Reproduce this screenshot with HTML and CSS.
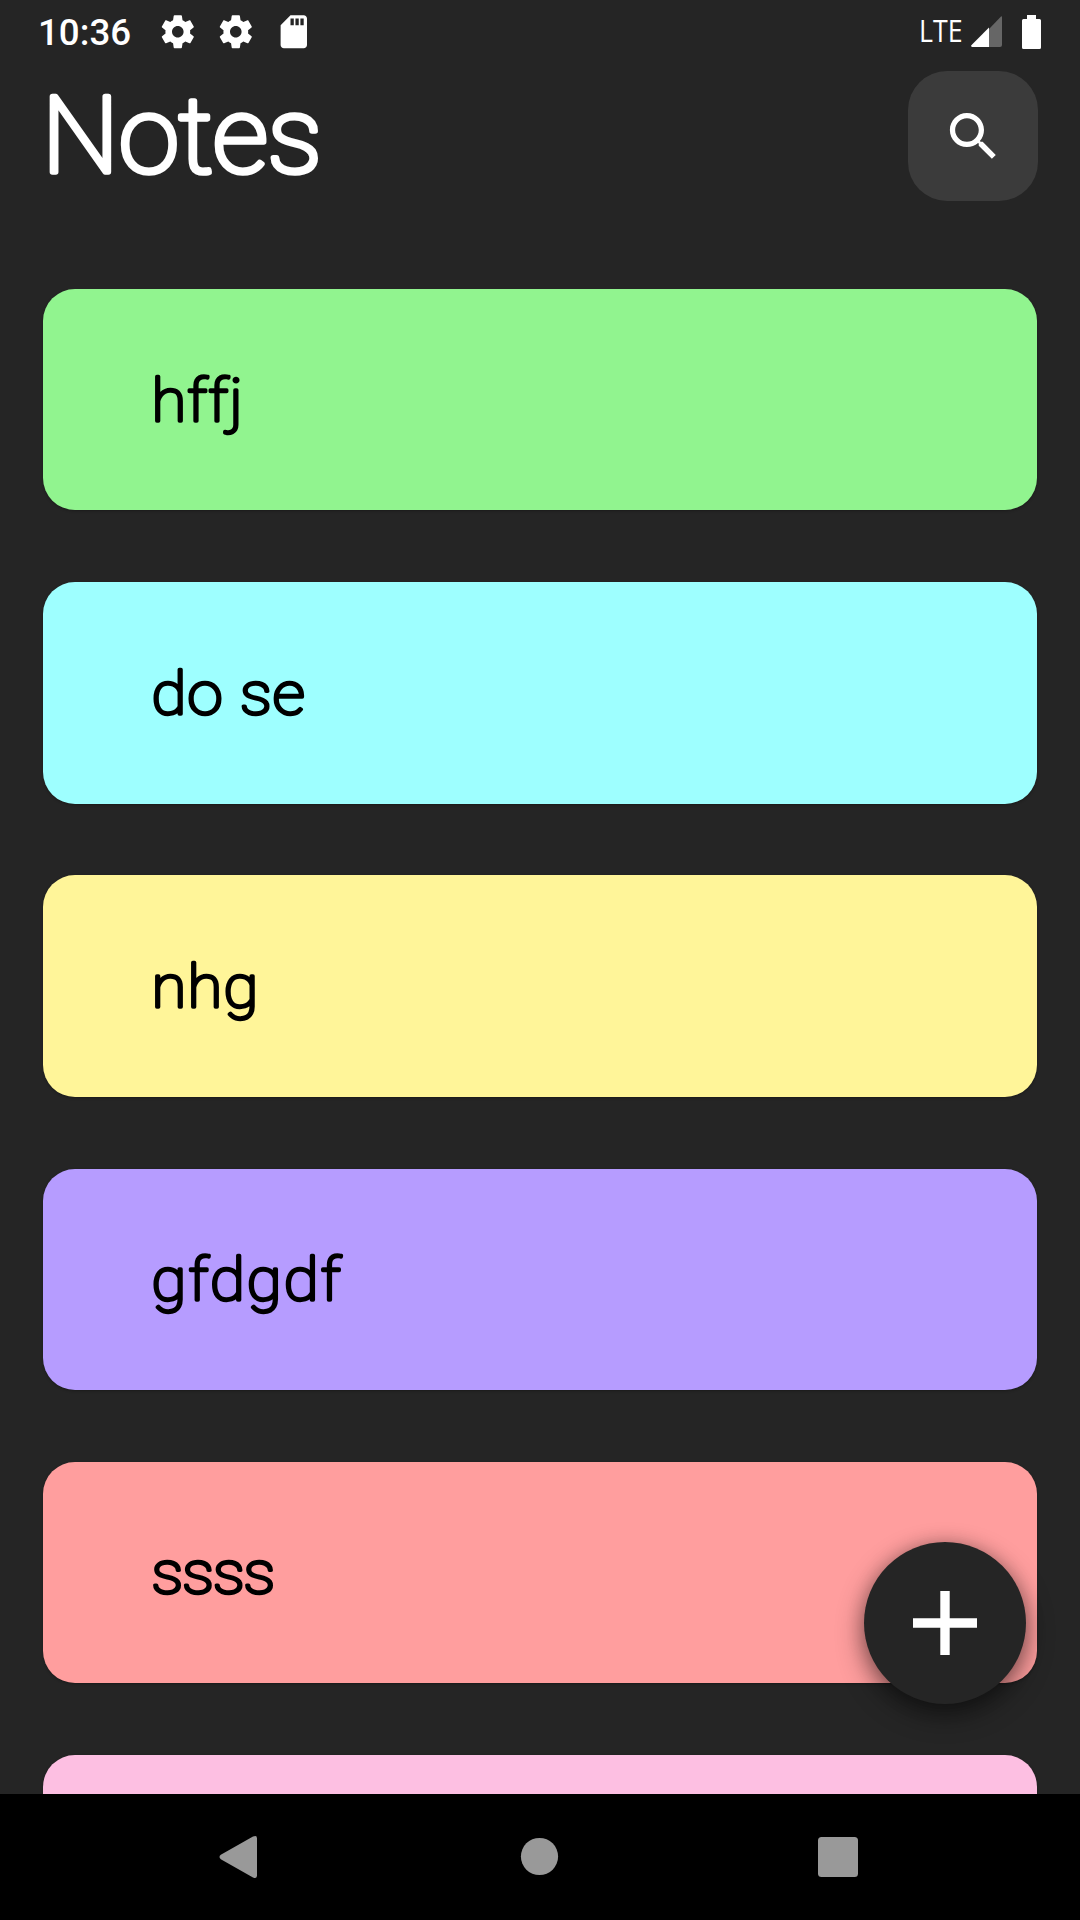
FILE: index.html
```html
<!DOCTYPE html>
<html lang="en">
<head>
<meta charset="utf-8">
<title>Notes</title>
<link rel="stylesheet" href="styles.css">
</head>
<body>
<div class="screen">
  <div class="status-bar">
    <span class="clock">10:36</span>
    <div class="status-icons">
      <svg class="status-icon" viewBox="0 0 24 24"><path d="M19.43 12.98c.04-.32.07-.64.07-.98s-.03-.66-.07-.98l2.11-1.65c.19-.15.24-.42.12-.64l-2-3.46c-.12-.22-.39-.3-.61-.22l-2.49 1c-.52-.4-1.08-.73-1.69-.98l-.38-2.65C14.46 2.18 14.25 2 14 2h-4c-.25 0-.46.18-.49.42l-.38 2.65c-.61.25-1.17.59-1.69.98l-2.49-1c-.23-.09-.49 0-.61.22l-2 3.46c-.13.22-.07.49.12.64l2.11 1.65c-.04.32-.07.65-.07.98s.03.66.07.98l-2.11 1.65c-.19.15-.24.42-.12.64l2 3.46c.12.22.39.3.61.22l2.49-1c.52.4 1.08.73 1.69.98l.38 2.65c.03.24.24.42.49.42h4c.25 0 .46-.18.49-.42l.38-2.65c.61-.25 1.17-.59 1.69-.98l2.49 1c.23.09.49 0 .61-.22l2-3.46c.12-.22.07-.49-.12-.64l-2.11-1.65zM12 15.5c-1.93 0-3.5-1.57-3.5-3.5s1.57-3.5 3.5-3.5 3.5 1.57 3.5 3.5-1.57 3.5-3.5 3.5z"/></svg>
      <svg class="status-icon" viewBox="0 0 24 24"><path d="M19.43 12.98c.04-.32.07-.64.07-.98s-.03-.66-.07-.98l2.11-1.65c.19-.15.24-.42.12-.64l-2-3.46c-.12-.22-.39-.3-.61-.22l-2.49 1c-.52-.4-1.08-.73-1.69-.98l-.38-2.65C14.46 2.18 14.25 2 14 2h-4c-.25 0-.46.18-.49.42l-.38 2.65c-.61.25-1.17.59-1.69.98l-2.49-1c-.23-.09-.49 0-.61.22l-2 3.46c-.13.22-.07.49.12.64l2.11 1.65c-.04.32-.07.65-.07.98s.03.66.07.98l-2.11 1.65c-.19.15-.24.42-.12.64l2 3.46c.12.22.39.3.61.22l2.49-1c.52.4 1.08.73 1.69.98l.38 2.65c.03.24.24.42.49.42h4c.25 0 .46-.18.49-.42l.38-2.65c.61-.25 1.17-.59 1.69-.98l2.49 1c.23.09.49 0 .61-.22l2-3.46c.12-.22.07-.49-.12-.64l-2.11-1.65zM12 15.5c-1.93 0-3.5-1.57-3.5-3.5s1.57-3.5 3.5-3.5 3.5 1.57 3.5 3.5-1.57 3.5-3.5 3.5z"/></svg>
      <svg class="status-icon" viewBox="0 0 24 24"><path d="M18 2h-8L4.02 8 4 20c0 1.1.9 2 2 2h12c1.1 0 2-.9 2-2V4c0-1.1-.9-2-2-2zm-6 6h-2V4h2v4zm3 0h-2V4h2v4zm3 0h-2V4h2v4z"/></svg>
    </div>
    <div class="status-right">
      <span class="network">LTE</span>
      <svg class="signal" viewBox="0 0 31 31"><path class="signal-rest" d="M18 13 30 .6q1-.9 1 .7v27.7q0 2-2 2H18z"/><path d="M18 11.5V31H1.200Q-.8 30.500.6 28.900z"/></svg>
      <svg class="battery" viewBox="0 0 19 34"><path d="M5 0h9v4h3.500Q19 4 19 5.500v27q0 1.500-1.500 1.500h-16Q0 34 0 32.500v-27Q0 4 1.500 4H5z"/></svg>
    </div>
  </div>
  <header class="header">
    <svg class="title" viewBox="0 0 400 130" role="heading" aria-level="1"><text x="1" y="101.500">Notes</text></svg>
    <button class="search" aria-label="Search"><svg class="search-icon" viewBox="0 0 24 24"><path d="M15.500 14h-.79l-.28-.27C15.410 12.590 16 11.110 16 9.500 16 5.910 13.090 3 9.500 3S3 5.910 3 9.500 5.910 16 9.500 16c1.610 0 3.090-.59 4.230-1.570l.27.28v.79l5 4.990L20.490 19l-4.990-5zm-6 0C7.010 14 5 11.990 5 9.500S7.010 5 9.500 5 14 7.010 14 9.500 11.990 14 9.500 14z"/></svg></button>
  </header>
  <main class="notes">
    <article class="note green"><svg class="note-title tight" viewBox="0 0 600 100"><text x="0.500" y="71.500">hffj</text></svg></article>
    <article class="note cyan"><svg class="note-title" viewBox="0 0 600 100"><text x="0.500" y="71.500">do se</text></svg></article>
    <article class="note yellow"><svg class="note-title" viewBox="0 0 600 100"><text x="0.500" y="71.500">nhg</text></svg></article>
    <article class="note purple"><svg class="note-title loose" viewBox="0 0 600 100"><text x="0.500" y="71.500">gfdgdf</text></svg></article>
    <article class="note red"><svg class="note-title tighter" viewBox="0 0 600 100"><text x="0.500" y="71.500">ssss</text></svg></article>
    <article class="note pink"></article>
  </main>
  <nav class="nav-bar">
    <svg class="nav-icon" viewBox="0 0 44 44"><path d="M2.800 19.800 35 1.600q4-2 4 1.800v37.200q0 3.800-4 1.800L2.800 24.200q-2.600-2.200 0-4.400z"/></svg>
    <svg class="nav-icon" viewBox="0 0 44 44"><circle cx="22.500" cy="21.500" r="18.600"/></svg>
    <svg class="nav-icon" viewBox="0 0 44 44"><rect x="2" y="2" width="40" height="40" rx="3.500"/></svg>
  </nav>
  <button class="fab" aria-label="Add note"><svg class="fab-icon" viewBox="0 0 64 64"><path d="M27.300 0h9.400v27.300H64v9.400H36.700V64h-9.400V36.700H0v-9.400h27.300z"/></svg></button>
</div>
</body>
</html>
```
FILE: styles.css
```css
* { box-sizing: border-box; }
body { margin: 0; background: #252525; }
button { border: 0; padding: 0; display: flex; align-items: center; justify-content: center; }
svg { display: block; fill: #fff; flex: none; }

.screen {
  position: relative;
  width: 1080px;
  height: 1920px;
  overflow: hidden;
  display: flex;
  flex-direction: column;
  background: #252525;
  color: #fff;
}

.status-bar {
  height: 63px;
  flex: none;
  display: flex;
  align-items: center;
  padding: 0 39px 0 38px;
}
.clock {
  width: 120px;
  padding-top: 3px;
  font: 500 36.700px/1 Roboto, sans-serif;
}
.status-icons { display: flex; gap: 18.400px; }
.status-icon { width: 39.600px; height: 39.600px; }
.status-right { margin-left: auto; display: flex; align-items: center; }
.network {
  width: 52px;
  margin-top: -3px;
  font: 400 31.500px/1 "Open Sans", sans-serif;
  transform: scaleX(.85);
  transform-origin: left;
}
.signal { width: 31px; height: 31px; margin-right: 20px; }
.signal-rest { fill: #666; }
.battery { width: 19px; height: 34px; }

.header {
  height: 226px;
  flex: none;
  display: flex;
  justify-content: space-between;
  align-items: flex-start;
  padding: 8.300px 42px 0 41px;
}
.title {
  width: 400px;
  height: 130px;
  font: 100 105px Roboto, sans-serif;
  letter-spacing: 0;
  stroke: #fff;
  stroke-width: 5.600px;
  stroke-linejoin: round;
}
.title text { transform: scaleX(1.035); }
.search {
  width: 130px;
  height: 130px;
  border-radius: 39px;
  background: #3b3b3b;
}
.search-icon { width: 63px; height: 63px; }

.notes {
  flex: 1;
  min-height: 0;
  overflow: hidden;
  display: flex;
  flex-direction: column;
  gap: 71.800px;
  padding: 0 43px;
}
.note {
  height: 221.400px;
  flex: none;
  display: flex;
  align-items: center;
  padding-left: 108px;
  border-radius: 32px;
  box-shadow: 0 1px 3px rgba(0, 0, 0, .3);
}
.note-title {
  width: 600px;
  height: 100px;
  fill: #000;
  stroke: #000;
  stroke-width: 3.400px;
  stroke-linejoin: round;
  font: 100 60px Roboto, sans-serif;
  font-variant-ligatures: none;
  letter-spacing: 1.100px;
}
.note-title text { transform: scaleX(1.06); }
.tight { letter-spacing: .900px; }
.tighter { letter-spacing: -.900px; }
.loose { letter-spacing: 2px; }
.green { background: #91f48f; }
.cyan { background: #9effff; }
.yellow { background: #fff599; }
.purple { background: #b69cff; }
.red { background: #ff9e9e; }
.pink { background: #fdbfe2; }

.nav-bar {
  height: 126px;
  flex: none;
  display: flex;
  justify-content: space-between;
  align-items: center;
  padding: 0 220px 0 218px;
  background: #000;
}
.nav-icon { width: 44px; height: 44px; fill: #999; }

.fab {
  position: absolute;
  left: 864px;
  top: 1542px;
  width: 162px;
  height: 162px;
  border-radius: 50%;
  background: #252525;
  box-shadow: 0 10px 28px rgba(0, 0, 0, .45), 0 2px 18px rgba(0, 0, 0, .24);
}
.fab-icon { width: 64px; height: 64px; }
```
